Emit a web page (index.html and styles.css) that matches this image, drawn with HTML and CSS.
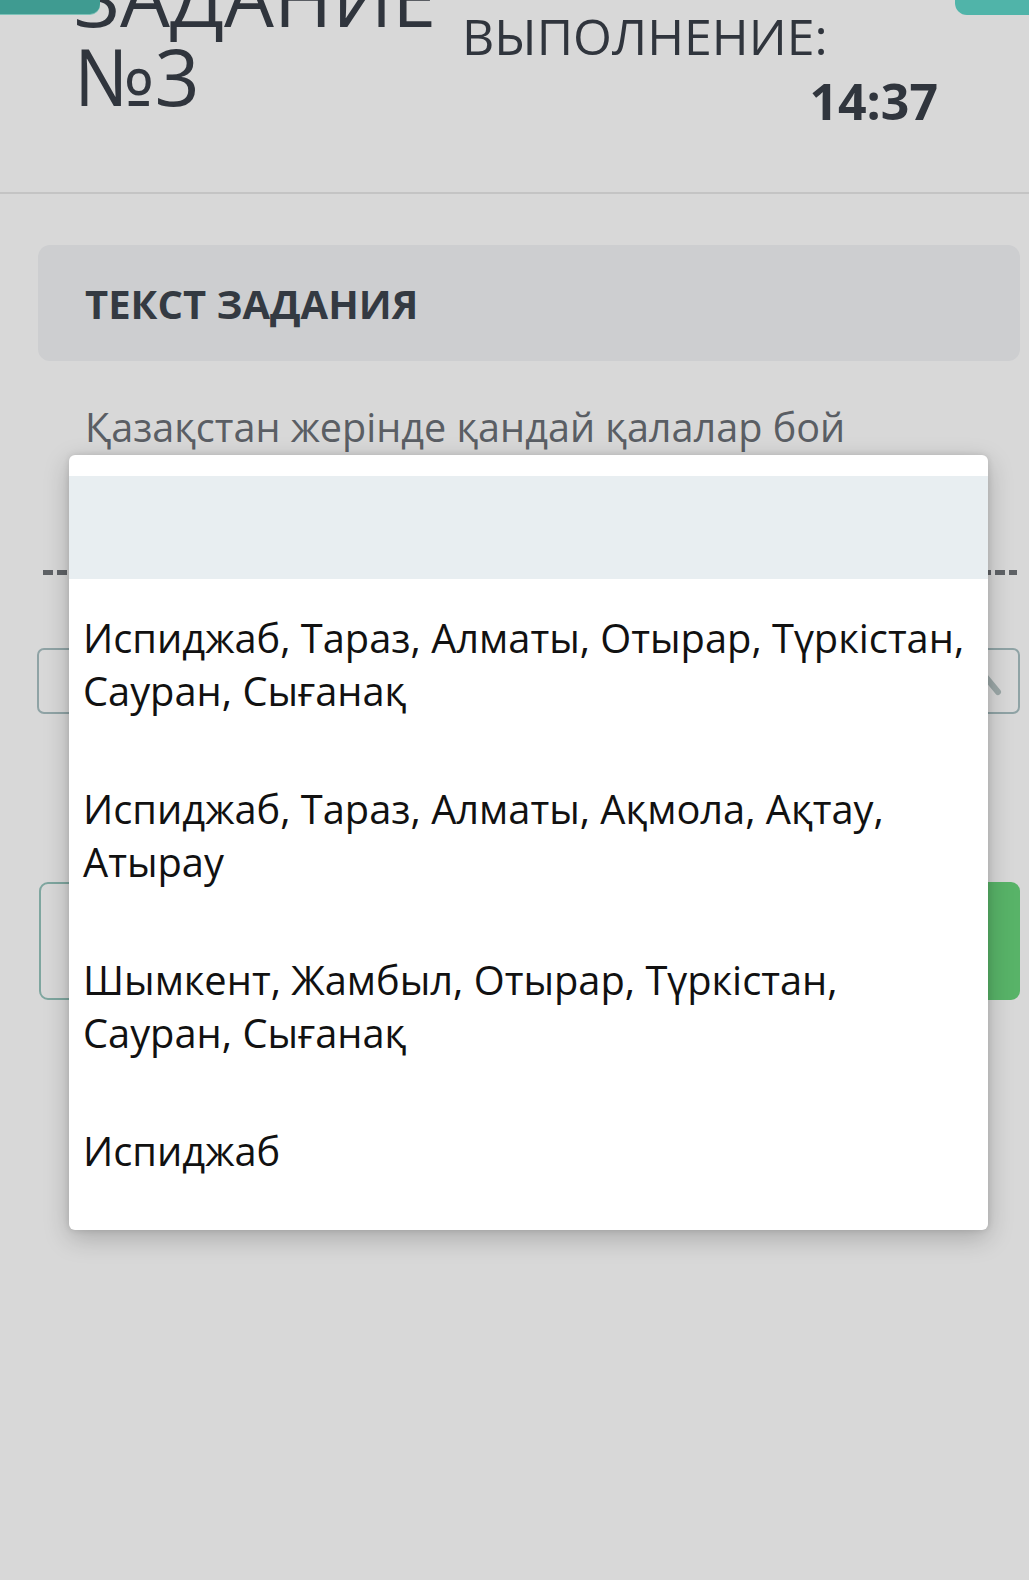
FILE: index.html
```html
<!DOCTYPE html>
<html lang="ru">
<head>
<meta charset="utf-8">
<title>Задание №3</title>
<link rel="stylesheet" href="styles.css">
</head>
<body>
<div class="tab tab-left"></div>
<div class="tab tab-right"></div>

<header class="header">
  <h1 class="title">ЗАДАНИЕ №3</h1>
  <div class="timer">
    <div class="timer-label">ВЫПОЛНЕНИЕ:</div>
    <div class="timer-value">14:37</div>
  </div>
</header>

<main class="main">
  <section class="card">
    <h2 class="card-title">ТЕКСТ ЗАДАНИЯ</h2>
  </section>
  <p class="question">Қазақстан жерінде қандай қалалар бой</p>
  <div class="dashed"></div>
  <div class="select">
    <svg class="select-icon" width="28" height="30" viewBox="0 0 28 30"><path d="M3 3 L22 26" stroke="#9ca8a8" stroke-width="6" stroke-linecap="round" fill="none"/></svg>
  </div>
  <div class="actions">
    <div class="btn btn-outline"></div>
    <div class="btn btn-green"></div>
  </div>
</main>

<div class="dropdown">
  <div class="dropdown-selected"></div>
  <ul class="options">
    <li class="option">Испиджаб, Тараз, Алматы, Отырар, Түркістан, Сауран, Сығанақ</li>
    <li class="option">Испиджаб, Тараз, Алматы, Ақмола, Ақтау, Атырау</li>
    <li class="option">Шымкент, Жамбыл, Отырар, Түркістан, Сауран, Сығанақ</li>
    <li class="option">Испиджаб</li>
  </ul>
</div>
</body>
</html>
```

FILE: styles.css
```css
html, body {
  margin: 0;
  padding: 0;
}
body {
  width: 1029px;
  min-height: 1580px;
  background: #d8d8d8;
  font-family: "Open Sans", "Noto Sans", sans-serif;
  color: #30353d;
  position: relative;
  overflow: hidden;
}

.tab {
  position: absolute;
  top: 0;
  height: 14px;
  z-index: 3;
}
.tab-left {
  left: 0;
  width: 100px;
  background: #3f9b91;
  border-bottom-right-radius: 10px;
  box-shadow: 0 1px 0 #7cc2b8;
}
.tab-right {
  right: 0;
  width: 74px;
  height: 15px;
  background: #50b4a9;
  border-bottom-left-radius: 12px;
}

.header {
  display: flex;
  margin-top: -43px;
  padding-left: 74px;
  height: 237px;
  border-bottom: 2px solid #c4c4c4;
  box-sizing: border-box;
}
.title {
  margin: 0;
  width: 388px;
  font-size: 79px;
  line-height: 79px;
  font-weight: 400;
  color: #30353d;
}
.timer {
  margin-top: 47px;
  width: 476px;
}
.timer-label {
  font-size: 50px;
  line-height: 64px;
  font-weight: 400;
}
.timer-value {
  font-size: 50px;
  line-height: 66px;
  font-weight: 700;
  text-align: right;
}

.main {
  padding: 0 9px 0 38px;
}
.card {
  margin-top: 51px;
  height: 116px;
  background: #cdced0;
  border-radius: 12px;
  display: flex;
  align-items: center;
  padding-left: 47px;
}
.card-title {
  margin: 0;
  font-size: 40px;
  font-weight: 700;
  color: #343a42;
}
.question {
  margin: 40px 0 0 0;
  padding-left: 47px;
  font-size: 39.6px;
  line-height: 52px;
  color: #5a5e64;
}
.dashed {
  margin: 117px 3px 0 5px;
  height: 5px;
  background: repeating-linear-gradient(90deg, #5f6266 0 10px, transparent 10px 14px);
}
.select {
  margin: 73px 0 0 -1px;
  height: 66px;
  border: 2px solid #8fa3a5;
  border-radius: 7px;
  box-sizing: border-box;
  display: flex;
  align-items: center;
  justify-content: flex-end;
  padding-right: 14px;
}
.actions {
  margin-top: 168px;
  display: flex;
  justify-content: space-between;
  gap: 60px;
}
.btn {
  height: 118px;
  border-radius: 9px;
  box-sizing: border-box;
  flex: 1;
}
.btn-outline {
  margin-left: 1px;
  border: 2px solid #7ea69f;
}
.btn-green {
  background: #58b368;
}

.dropdown {
  position: absolute;
  left: 69px;
  top: 455px;
  width: 919px;
  background: #fff;
  border-radius: 6px;
  padding: 21px 0 20px;
  box-sizing: border-box;
  box-shadow: 0 8px 26px rgba(0, 0, 0, 0.22), 0 0 6px rgba(0, 0, 0, 0.12);
  z-index: 5;
}
.dropdown-selected {
  height: 103px;
  background: #e8eef1;
}
.options {
  list-style: none;
  margin: 0;
  padding: 0;
}
.option {
  padding: 32px 18px 33px 14px;
  font-size: 39.8px;
  line-height: 53px;
  color: #111;
}
```
